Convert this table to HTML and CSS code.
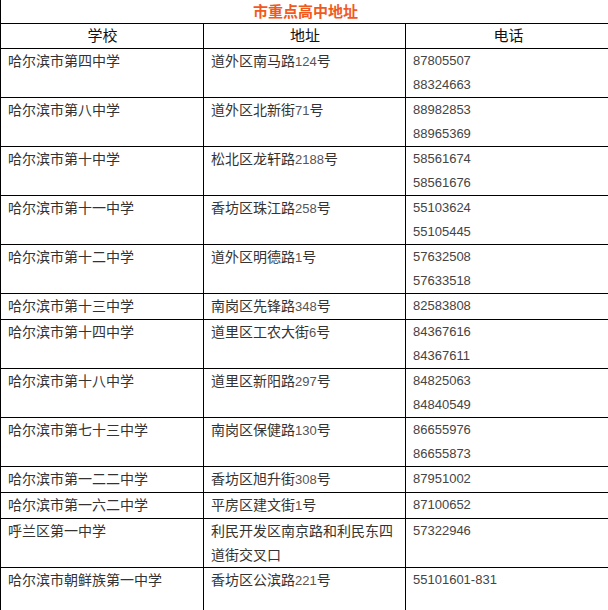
FILE: index.html
```html
<!DOCTYPE html>
<html lang="zh-CN">
<head>
<meta charset="utf-8">
<title>市重点高中地址</title>
<link rel="stylesheet" href="styles.css">
</head>
<body>
<table class="schools">
  <colgroup>
    <col class="c1"><col class="c2"><col class="c3">
  </colgroup>
  <tr class="title-row"><td colspan="3" class="title">市重点高中地址</td></tr>
  <tr class="head-row"><th>学校</th><th>地址</th><th>电话</th></tr>
  <tr><td>哈尔滨市第四中学</td><td>道外区南马路<span class="num">124</span>号</td><td class="tel">87805507<br>88324663</td></tr>
  <tr><td>哈尔滨市第八中学</td><td>道外区北新街<span class="num">71</span>号</td><td class="tel">88982853<br>88965369</td></tr>
  <tr><td>哈尔滨市第十中学</td><td>松北区龙轩路<span class="num">2188</span>号</td><td class="tel">58561674<br>58561676</td></tr>
  <tr><td>哈尔滨市第十一中学</td><td>香坊区珠江路<span class="num">258</span>号</td><td class="tel">55103624<br>55105445</td></tr>
  <tr><td>哈尔滨市第十二中学</td><td>道外区明德路<span class="num">1</span>号</td><td class="tel">57632508<br>57633518</td></tr>
  <tr><td>哈尔滨市第十三中学</td><td>南岗区先锋路<span class="num">348</span>号</td><td class="tel">82583808</td></tr>
  <tr><td>哈尔滨市第十四中学</td><td>道里区工农大街<span class="num">6</span>号</td><td class="tel">84367616<br>84367611</td></tr>
  <tr><td>哈尔滨市第十八中学</td><td>道里区新阳路<span class="num">297</span>号</td><td class="tel">84825063<br>84840549</td></tr>
  <tr><td>哈尔滨市第七十三中学</td><td>南岗区保健路<span class="num">130</span>号</td><td class="tel">86655976<br>86655873</td></tr>
  <tr><td>哈尔滨市第一二二中学</td><td>香坊区旭升街<span class="num">308</span>号</td><td class="tel">87951002</td></tr>
  <tr><td>哈尔滨市第一六二中学</td><td>平房区建文街<span class="num">1</span>号</td><td class="tel">87100652</td></tr>
  <tr><td>呼兰区第一中学</td><td>利民开发区南京路和利民东四道街交叉口</td><td class="tel">57322946</td></tr>
  <tr><td>哈尔滨市朝鲜族第一中学</td><td>香坊区公滨路<span class="num">221</span>号</td><td class="tel">55101601-831<br>&nbsp;</td></tr>
</table>
</body>
</html>
```

FILE: styles.css
```css
html, body {
  margin: 0;
  padding: 0;
  background: #fff;
}

.schools {
  border-collapse: collapse;
  table-layout: fixed;
  width: 610px;
  font-family: "Liberation Sans", "Noto Sans CJK SC", sans-serif;
  font-size: 14px;
  color: #333;
}

.schools .c1 { width: 203px; }
.schools .c2 { width: 202px; }
.schools .c3 { width: 205px; }

.schools td,
.schools th {
  border: 1px solid #000;
  padding: 0 6px 0 7px;
  line-height: 24px;
  vertical-align: top;
  text-align: left;
}

.schools .title-row td {
  border-top: none;
  height: 23px;
  line-height: 23px;
  padding: 0;
  text-align: center;
  color: #f25a1d;
  font-weight: bold;
  font-size: 15px;
}

.schools th {
  text-align: center;
  font-weight: normal;
  color: #111;
  font-size: 15px;
}

.schools .num {
  font-size: 13px;
  color: #555;
}

.schools .tel {
  font-size: 13px;
  color: #444;
}
```
